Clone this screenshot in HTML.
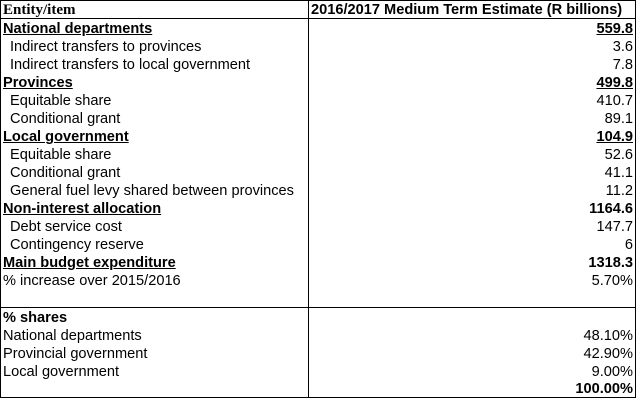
<!DOCTYPE html>
<html><head><style>
body{margin:0;background:#fff;width:636px;height:406px;position:relative;font-family:"Liberation Sans",sans-serif;font-size:14.6px;color:#000}
.b{position:absolute;background:#000}
.r{position:absolute;left:0;width:636px;height:18px;line-height:18px;margin-top:1px}
.l{position:absolute;left:3px;white-space:nowrap}
.v{position:absolute;right:3px;white-space:nowrap}
.i{left:10px}
.h{font-weight:bold;text-decoration:underline}
.bo{font-weight:bold}
</style></head><body>
<div class="b" style="left:0;top:0;width:636px;height:1px"></div>
<div class="b" style="left:0;top:397px;width:636px;height:1px"></div>
<div class="b" style="left:0;top:0;width:1px;height:398px"></div>
<div class="b" style="left:635px;top:0;width:1px;height:398px"></div>
<div class="b" style="left:308px;top:0;width:1px;height:398px"></div>
<div class="b" style="left:0;top:18px;width:636px;height:1px"></div>
<div class="b" style="left:0;top:307px;width:636px;height:1px"></div>

<div class="r" style="top:0px"><span class="l" style="font-family:'Liberation Serif',serif;font-weight:bold;font-size:15px">Entity/item</span><span class="l bo" style="left:311px">2016/2017 Medium Term Estimate (R billions)</span></div>
<div class="r" style="top:19px"><span class="l h">National departments</span><span class="v bo h">559.8</span></div>
<div class="r" style="top:37px"><span class="l i">Indirect transfers to provinces</span><span class="v">3.6</span></div>
<div class="r" style="top:55px"><span class="l i">Indirect transfers to local government</span><span class="v">7.8</span></div>
<div class="r" style="top:73px"><span class="l h">Provinces</span><span class="v bo h">499.8</span></div>
<div class="r" style="top:91px"><span class="l i">Equitable share</span><span class="v">410.7</span></div>
<div class="r" style="top:109px"><span class="l i">Conditional grant</span><span class="v">89.1</span></div>
<div class="r" style="top:127px"><span class="l h">Local government</span><span class="v bo h">104.9</span></div>
<div class="r" style="top:145px"><span class="l i">Equitable share</span><span class="v">52.6</span></div>
<div class="r" style="top:163px"><span class="l i">Conditional grant</span><span class="v">41.1</span></div>
<div class="r" style="top:181px"><span class="l i">General fuel levy shared between provinces</span><span class="v">11.2</span></div>
<div class="r" style="top:199px"><span class="l h">Non-interest allocation</span><span class="v bo">1164.6</span></div>
<div class="r" style="top:217px"><span class="l i">Debt service cost</span><span class="v">147.7</span></div>
<div class="r" style="top:235px"><span class="l i">Contingency reserve</span><span class="v">6</span></div>
<div class="r" style="top:253px"><span class="l h">Main budget expenditure</span><span class="v bo">1318.3</span></div>
<div class="r" style="top:271px"><span class="l">% increase over 2015/2016</span><span class="v">5.70%</span></div>
<div class="r" style="top:308px"><span class="l bo">% shares</span></div>
<div class="r" style="top:326px"><span class="l">National departments</span><span class="v">48.10%</span></div>
<div class="r" style="top:344px"><span class="l">Provincial government</span><span class="v">42.90%</span></div>
<div class="r" style="top:362px"><span class="l">Local government</span><span class="v">9.00%</span></div>
<div class="r" style="top:379px"><span class="v bo">100.00%</span></div>
</body></html>
